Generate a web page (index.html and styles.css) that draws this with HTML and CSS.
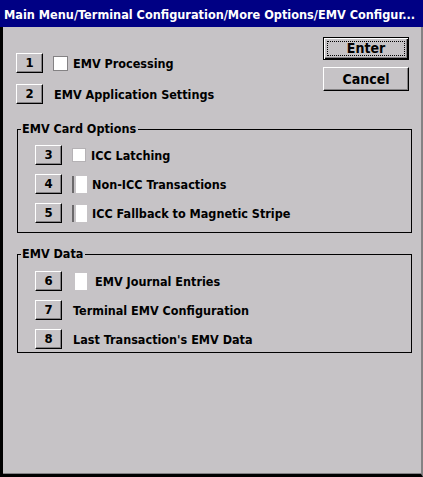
FILE: index.html
```html
<!DOCTYPE html>
<html lang="en">

<head>
  <meta charset="UTF-8">
  <meta name="viewport" content="width=device-width, initial-scale=1.0">
  <title>EMV Configuration</title>
  <link rel="stylesheet" href="styles.css">
</head>

<body>
  <div class="window">
    <div class="titlebar">Main Menu/Terminal Configuration/More Options/EMV Configur...</div>
    <div class="top">
      <div class="menu">
        <div class="row">
          <button class="num">1</button>
          <span class="check"></span>
          <span class="label">EMV Processing</span>
        </div>
        <div class="row">
          <button class="num">2</button>
          <span class="label near">EMV Application Settings</span>
        </div>
      </div>
      <div class="actions">
        <button class="btn default"><span>Enter</span></button>
        <button class="btn">Cancel</button>
      </div>
    </div>

    <fieldset class="group first">
      <legend>EMV Card Options</legend>
      <div class="row">
        <button class="num">3</button>
        <span class="check light"></span>
        <span class="label">ICC Latching</span>
      </div>
      <div class="row">
        <button class="num">4</button>
        <span class="check split"></span>
        <span class="label">Non-ICC Transactions</span>
      </div>
      <div class="row">
        <button class="num">5</button>
        <span class="check split"></span>
        <span class="label">ICC Fallback to Magnetic Stripe</span>
      </div>
    </fieldset>

    <fieldset class="group second">
      <legend>EMV Data</legend>
      <div class="row">
        <button class="num">6</button>
        <span class="check bare"></span>
        <span class="label">EMV Journal Entries</span>
      </div>
      <div class="row">
        <button class="num">7</button>
        <span class="label near">Terminal EMV Configuration</span>
      </div>
      <div class="row">
        <button class="num">8</button>
        <span class="label near">Last Transaction's EMV Data</span>
      </div>
    </fieldset>
  </div>
</body>

</html>
```

FILE: styles.css
```css
* {
	margin: 0;
	padding: 0;
	box-sizing: border-box;
}

body {
	width: 423px;
	height: 477px;
	font-family: "DejaVu Sans Condensed", "DejaVu Sans", sans-serif;
	font-stretch: condensed;
	font-weight: bold;
	font-size: 12.5px;
	color: #000;
	background: #000;
}

button {
	font: inherit;
	color: #000;
	outline: none;
}

.window {
	width: 423px;
	height: 477px;
	background: #c6c3c6;
	border-left: 3px solid #000;
	border-right: 2px solid #848284;
	border-bottom: 3px solid #000;
	box-shadow: inset 0 -1px 0 #848284;
}

.titlebar {
	height: 27px;
	margin-left: -3px;
	margin-right: -2px;
	padding-left: 4px;
	background: #000084;
	color: #fff;
	font-size: 12.6px;
	line-height: 29px;
	white-space: nowrap;
	overflow: hidden;
}

.top {
	display: flex;
	justify-content: space-between;
	padding: 10px 12px 0 13px;
}

.menu {
	padding-top: 16px;
	display: flex;
	flex-direction: column;
	gap: 11px;
}

.row {
	display: flex;
	align-items: center;
	height: 20px;
}

.num {
	width: 27px;
	height: 20px;
	background: #c6c3c6;
	border: 1px solid;
	border-color: #fff #000 #000 #fff;
	box-shadow: inset -1px -1px 0 #848284;
	font-size: 13px;
	line-height: 16px;
	flex-shrink: 0;
}

.check {
	width: 15px;
	height: 15px;
	margin-left: 10px;
	background: #fff;
	border: 1px solid #848284;
}

.check.light {
	width: 14px;
	height: 14px;
	border-color: #b5b2b5;
}

.check.split {
	width: 15px;
	height: 17px;
	border: 0;
	border-left: 2px solid #6b696b;
	padding-left: 2px;
	background-clip: content-box;
}

.check.bare {
	width: 12px;
	height: 17px;
	margin-left: 13px;
	border: 0;
}

.label {
	margin-left: 5px;
	white-space: nowrap;
}

.check.bare + .label {
	margin-left: 8px;
}

.label.near {
	margin-left: 11px;
}

.actions {
	display: flex;
	flex-direction: column;
	gap: 7px;
}

.btn {
	width: 86px;
	height: 24px;
	background: #c6c3c6;
	border: 1px solid;
	border-color: #fff #000 #000 #fff;
	box-shadow: inset -1px -1px 0 #848284;
	font-size: 14px;
}

.btn.default {
	height: 23px;
	border: 1px solid #000;
	box-shadow: inset 1px 1px 0 #fff, inset -1px -1px 0 #000, inset -2px -2px 0 #848284;
	padding: 3px;
}

.btn.default span {
	display: block;
	height: 100%;
	border: 1px dotted #000;
	line-height: 13px;
}

.group {
	margin: 0 9px 0 14px;
	border: 1px solid #000;
	padding: 0;
	display: flex;
	flex-direction: column;
	gap: 9px;
}

.group .row {
	margin-left: 17px;
}

.group legend {
	margin-left: 3px;
	padding: 0 2px 0 1px;
	font-size: 12.5px;
	line-height: 14px;
}

.group.first {
	margin-top: 18px;
	padding-top: 9px;
	padding-bottom: 9px;
}

.group.second {
	margin-top: 14px;
	padding-top: 10px;
	padding-bottom: 3px;
	gap: 9px;
}
```
